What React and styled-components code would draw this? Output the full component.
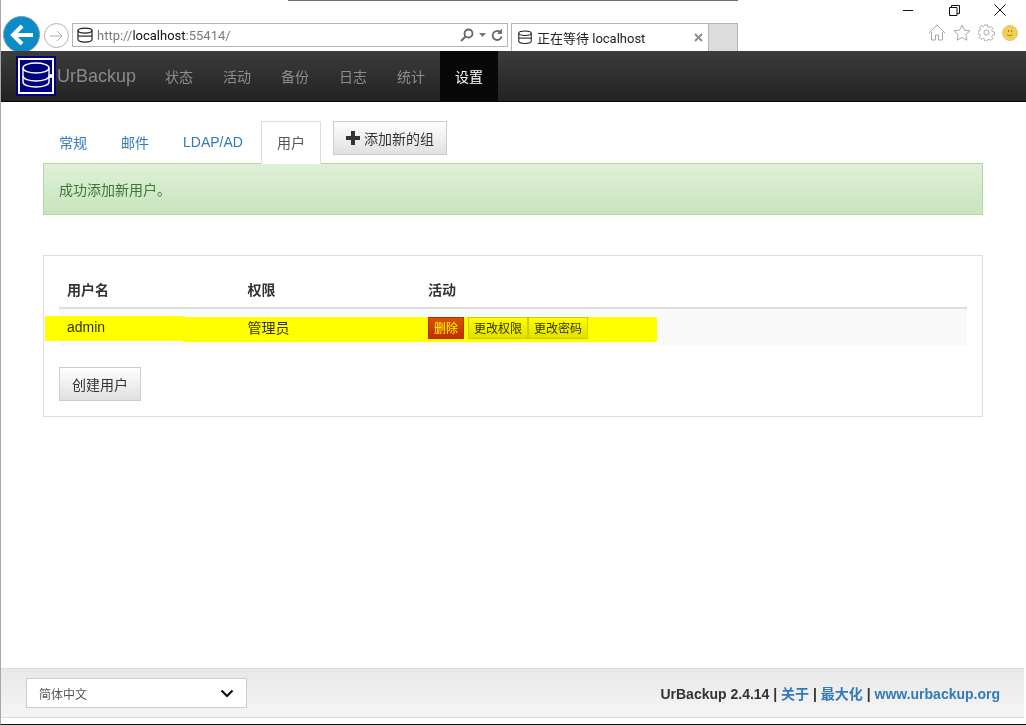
import * as React from 'react';
import styled, { createGlobalStyle } from 'styled-components';

const cjk = `"Liberation Sans", "Noto Sans CJK SC", sans-serif`;
const chromeFont = `Roboto, "Noto Sans CJK SC", sans-serif`;

const GlobalStyle = createGlobalStyle`
    html, body {
        margin: 0;
        padding: 0;
        background: #fff;
    }
    * {
        box-sizing: border-box;
    }
`;

const Page = styled.div`
    width: 1026px;
    height: 725px;
    display: flex;
    flex-direction: column;
    position: relative;
    overflow: hidden;
    border-left: 1px solid #a8a8a8;
    border-bottom: 1px solid #111;
    font-family: ${cjk};
    font-size: 14px;
    color: #333;
`;

/* browser chrome */
const Chrome = styled.div`
    height: 51px;
    flex: none;
    display: flex;
    flex-direction: column;
    position: relative;
    overflow: hidden;
`;

const TitleRow = styled.div`
    height: 22px;
    flex: none;
    display: flex;
    justify-content: space-between;
`;

const TitleLine = styled.div`
    width: 450px;
    height: 1px;
    background: #6e6e6e;
    margin-left: 287px;
`;

const WindowButtons = styled.div`
    display: flex;
    padding-top: 3px;
    margin-right: 3px;
    height: 20px;
`;

const WindowButton = styled.div`
    width: 46px;
    height: 14px;
    display: flex;
    align-items: center;
    justify-content: center;
`;

const AddressRow = styled.div`
    flex: 1;
    display: flex;
    align-items: flex-start;
    padding: 1px 0 0 43px;
`;

const BackButton = styled.div`
    position: absolute;
    left: 2px;
    top: 16px;
    width: 37px;
    height: 37px;
    border-radius: 50%;
    background: #0a8ccb;
    border: 1px solid #8a9aa5;
    display: flex;
    align-items: center;
    justify-content: center;
`;

const ForwardButton = styled.div`
    width: 25px;
    height: 25px;
    border-radius: 50%;
    border: 1px solid #b5b5b5;
    display: flex;
    align-items: center;
    justify-content: center;
    flex: none;
`;

const AddressBox = styled.div`
    width: 436px;
    height: 24px;
    margin-left: 3px;
    border: 1px solid #b4b4b4;
    display: flex;
    align-items: center;
    padding: 0 4px 0 3px;
    flex: none;
    font-family: ${chromeFont};
    font-size: 13px;
    color: #7a7a7a;
`;

const Url = styled.span`
    margin-left: 3px;
    flex: 1;
    b {
        font-weight: 400;
        color: #111;
    }
`;

const AddressTools = styled.div`
    display: flex;
    align-items: center;
    gap: 5px;
`;

const Tab = styled.div`
    width: 198px;
    height: 28px;
    margin-left: 3px;
    border: 1px solid #b4b4b4;
    border-bottom: none;
    display: flex;
    align-items: center;
    padding: 0 5px;
    flex: none;
    font-family: ${chromeFont};
    font-size: 13px;
    color: #222;
`;

const TabTitle = styled.span`
    margin-left: 4px;
    flex: 1;
`;

const TabClose = styled.span`
    display: flex;
`;

const NewTab = styled.div`
    width: 29px;
    height: 28px;
    background: #dcdcdc;
    border: 1px solid #b4b4b4;
    border-left: none;
    border-bottom: none;
    flex: none;
`;

const BrowserTools = styled.div`
    margin-left: auto;
    margin-right: 8px;
    margin-top: 1px;
    display: flex;
    align-items: center;
    gap: 7px;
`;

const Smiley = styled.div`
    width: 16px;
    height: 16px;
    border-radius: 50%;
    background: #f3cf4f;
    border: 1px solid #d8c690;
    display: flex;
    align-items: center;
    justify-content: center;
`;

/* urbackup navbar */
const Navbar = styled.div`
    height: 51px;
    flex: none;
    display: flex;
    align-items: stretch;
    background: linear-gradient(to bottom, #3c3c3c 0%, #222 100%);
    border-bottom: 1px solid #080808;
`;

const Brand = styled.div`
    display: flex;
    align-items: center;
    padding-left: 15px;
    width: 149px;
    flex: none;
`;

const BrandName = styled.span`
    font-size: 18px;
    color: #8a8a8a;
    margin-left: 1px;
`;

const NavItem = styled.div`
    padding: 0 15px;
    display: flex;
    align-items: center;
    font-size: 14px;
    color: ${({ $active }) => ($active ? '#fff' : '#8d8d8d')};
    background: ${({ $active }) => ($active ? '#080808' : 'transparent')};
`;

/* main content */
const Content = styled.div`
    flex: 1;
    padding: 19px 43px 0 42px;
`;

const Tabs = styled.div`
    display: flex;
    align-items: flex-start;
    height: 42px;
`;

const TabLink = styled.div`
    height: ${({ $active }) => ($active ? '43px' : '42px')};
    padding: 0 15px 2px;
    margin-right: 2px;
    display: flex;
    align-items: center;
    border: 1px solid ${({ $active }) => ($active ? '#ddd' : 'transparent')};
    border-bottom: none;
    background: #fff;
    position: relative;
    z-index: 1;
    color: ${({ $active }) => ($active ? '#555' : '#337ab7')};
`;

const Button = styled.div`
    display: inline-flex;
    align-items: center;
    justify-content: center;
    height: 34px;
    padding: 0 12px;
    border: 1px solid #ccc;
    background: linear-gradient(to bottom, #fff 0%, #e0e0e0 100%);
    color: #333;
    font-size: 14px;
`;

const AddGroupButton = styled(Button)`
    margin-left: 10px;
    gap: 4px;
`;

const Alert = styled.div`
    height: 52px;
    padding: 0 15px;
    display: flex;
    align-items: center;
    border: 1px solid #b2dba1;
    background: linear-gradient(to bottom, #dff0d8 0%, #c8e5bc 100%);
    color: #3c763d;
`;

const Panel = styled.div`
    margin-top: 40px;
    height: 162px;
    border: 1px solid #ddd;
    padding: 15px;
    position: relative;
`;

const Row = styled.div`
    display: grid;
    grid-template-columns: 180.5px 180.5px 1fr;
    padding: 0 8px;
    align-items: center;
`;

const HeadRow = styled(Row)`
    height: 38px;
    border-bottom: 2px solid #ddd;
    font-weight: 700;
`;

/* the white strip keeps the marker pure yellow over the striped row */
const BodyRow = styled(Row)`
    height: 37px;
    background: #f9f9f9;
    position: relative;
    &::before {
        content: '';
        position: absolute;
        left: 0;
        top: 7px;
        width: 598px;
        height: 26px;
        background: #fff;
    }
`;

const Cell = styled.span`
    position: relative;
    margin-bottom: 2px;
`;

const Actions = styled.div`
    display: flex;
    position: relative;
`;

const SmallButton = styled.div`
    height: 22px;
    padding: 0 5px;
    display: flex;
    align-items: center;
    font-size: 12px;
    border: 1px solid #ccc;
    color: #333;
    background: linear-gradient(to bottom, #fff 0%, #e0e0e0 100%);
`;

const DeleteButton = styled(SmallButton)`
    background: linear-gradient(to bottom, #d9534f 0%, #c12e2a 100%);
    border-color: #b92c28;
    color: #fff;
    margin-right: 4px;
`;

const CreateButton = styled(Button)`
    margin-top: 21px;
`;

/* marker strokes on top of the row, multiplied so the text shows through */
const Highlight = styled.div`
    position: absolute;
    left: ${({ $left }) => $left}px;
    top: ${({ $top }) => $top}px;
    width: ${({ $width }) => $width}px;
    height: 25px;
    background: #ffff00;
    mix-blend-mode: multiply;
`;

/* footer */
const Footer = styled.div`
    height: 50px;
    flex: none;
    margin: 0 2px 6px 0;
    display: flex;
    align-items: center;
    justify-content: space-between;
    padding: 0 24px 0 25px;
    border-top: 1px solid #ddd;
    border-bottom: 1px solid #ddd;
    background: linear-gradient(to bottom, #e8e8e8 0%, #f5f5f5 100%);
`;

const LanguageSelect = styled.div`
    width: 221px;
    height: 30px;
    border: 1px solid #ccc;
    background: #fff;
    display: flex;
    align-items: center;
    justify-content: space-between;
    padding: 0 12px;
    font-size: 12px;
    color: #555;
`;

const FooterInfo = styled.div`
    font-weight: 700;
    font-size: 14px;
    color: #333;
    a {
        color: #337ab7;
        text-decoration: none;
    }
`;

const DbIcon = ({ size = 18, color = '#222' }) => (
    <svg width={size} height={size * 0.9} viewBox="0 0 18 16" fill="none" stroke={color} strokeWidth="1.2">
        <path d="M2 3.5C2 2 4.5 1 9 1s7 1 7 2.5v9c0 1.5-2.500 2.500-7 2.500s-7-1-7-2.500z" />
        <path d="M2 3.500C2 5 4.500 6 9 6s7-1 7-2.500" />
        <path d="M2 9h14" />
    </svg>
);

const Logo = () => (
    <svg width="40" height="40" viewBox="0 0 40 40">
        <rect width="40" height="40" fill="#000080" />
        <path d="M3 3h34v34H3z" fill="none" stroke="#fff" strokeWidth="2" />
        <g fill="none" stroke="#fff" strokeWidth="1.400">
            <path d="M7 12c0-3 6-5 13-5s13 2 13 5v14c0 3-6 5-13 5s-13-2-13-5z" />
            <path d="M7 12c0 3 6 5 13 5s13-2 13-5" />
            <path d="M7 20c0 3 6 5 13 5s13-2 13-5" />
        </g>
        <circle cx="35" cy="20" r="2" fill="#fff" />
    </svg>
);

const App = () => {
    const navItems = ['状态', '活动', '备份', '日志', '统计'];

    return <>
        <GlobalStyle />
        <Page>
            <Chrome>
                <TitleRow>
                    <TitleLine />
                    <WindowButtons>
                        <WindowButton>
                            <svg width="11" height="11" viewBox="0 0 11 11" stroke="#111"><path d="M0 5.500h10" /></svg>
                        </WindowButton>
                        <WindowButton>
                            <svg width="11" height="11" viewBox="0 0 11 11" fill="none" stroke="#111">
                                <path d="M.5 2.500h7.500v8H.5zM2.500 2.500V.5h8v8H8" />
                            </svg>
                        </WindowButton>
                        <WindowButton>
                            <svg width="12" height="12" viewBox="0 0 12 12" stroke="#111"><path d="M.5.5l11 11M11.500.5l-11 11" /></svg>
                        </WindowButton>
                    </WindowButtons>
                </TitleRow>
                <BackButton>
                    <svg width="24" height="22" viewBox="0 0 24 22" fill="none" stroke="#fff" strokeWidth="4">
                        <path d="M23 11H4M12 2l-9 9 9 9" />
                    </svg>
                </BackButton>
                <AddressRow>
                    <ForwardButton>
                        <svg width="16" height="14" viewBox="0 0 16 14" fill="none" stroke="#b0b0b0" strokeWidth="1">
                            <path d="M1 7h12M8 2l5 5-5 5" />
                        </svg>
                    </ForwardButton>
                    <AddressBox>
                        <DbIcon />
                        <Url>http://<b>localhost</b>:55414/</Url>
                        <AddressTools>
                            <svg width="14" height="14" viewBox="0 0 14 14" fill="none" stroke="#666" strokeWidth="1.800">
                                <circle cx="8.500" cy="5.500" r="4" />
                                <path d="M5.500 8.500L1 13" />
                            </svg>
                            <svg width="7" height="4" viewBox="0 0 7 4" fill="#777"><path d="M0 0h7L3.500 4z" /></svg>
                            <svg width="12" height="13" viewBox="0 0 12 13" fill="none" stroke="#666" strokeWidth="1.800">
                                <path d="M10.500 7.500a4.500 4.500 0 1 1-1.500-4.500" />
                                <path d="M10.500 0v4.500H6.500" fill="#666" strokeWidth="0.800" />
                            </svg>
                        </AddressTools>
                    </AddressBox>
                    <Tab>
                        <DbIcon size={16} />
                        <TabTitle>正在等待 localhost</TabTitle>
                        <TabClose>
                            <svg width="9" height="9" viewBox="0 0 9 9" stroke="#8d8d8d" strokeWidth="2"><path d="M1 1l7 7M8 1L1 8" /></svg>
                        </TabClose>
                    </Tab>
                    <NewTab />
                    <BrowserTools>
                        <svg width="18" height="17" viewBox="0 0 18 17" fill="none" stroke="#a8a8a8">
                            <path d="M1 9l8-8 8 8M3.500 8v8h4v-5h3v5h4V8" />
                        </svg>
                        <svg width="18" height="17" viewBox="0 0 18 17" fill="none" stroke="#a8a8a8">
                            <path d="M9 1l2.400 5.200 5.600.6-4.200 3.800 1.200 5.600L9 13.400 4 16.200l1.200-5.600L1 6.800l5.600-.6z" />
                        </svg>
                        <svg width="17" height="17" viewBox="0 0 17 17" fill="none" stroke="#a8a8a8">
                            <circle cx="8.500" cy="8.500" r="2.500" />
                            <path d="M7 1h3l.4 2.200 1.600.7 1.900-1.300 2 2-1.300 1.900.7 1.600 2.200.4v3l-2.200.4-.7 1.600 1.300 1.900-2 2-1.900-1.300-1.600.7L10 18H7l-.4-2.200-1.600-.7-1.900 1.300-2-2 1.300-1.900-.7-1.600L0 10.500v-3l2.200-.4.700-1.600L1.600 3.600l2-2 1.900 1.300 1.100-.7z" transform="scale(0.94)" />
                        </svg>
                        <Smiley>
                            <svg width="10" height="10" viewBox="0 0 10 10" fill="none" stroke="#9a8430">
                                <path d="M3.500 2v2M6.500 2v2" />
                                <path d="M2 6.500c1.500 1.500 4.500 1.500 6 0" />
                            </svg>
                        </Smiley>
                    </BrowserTools>
                </AddressRow>
            </Chrome>

            <Navbar>
                <Brand>
                    <Logo />
                    <BrandName>UrBackup</BrandName>
                </Brand>
                {navItems.map(item => <NavItem key={item}>{item}</NavItem>)}
                <NavItem $active>设置</NavItem>
            </Navbar>

            <Content>
                <Tabs>
                    <TabLink>常规</TabLink>
                    <TabLink>邮件</TabLink>
                    <TabLink>LDAP/AD</TabLink>
                    <TabLink $active>用户</TabLink>
                    <AddGroupButton>
                        <svg width="14" height="14" viewBox="0 0 14 14" fill="#333"><path d="M5 0h4v5h5v4H9v5H5V9H0V5h5z" /></svg>
                        添加新的组
                    </AddGroupButton>
                </Tabs>
                <Alert>成功添加新用户。</Alert>
                <Panel>
                    <HeadRow>
                        <span>用户名</span>
                        <span>权限</span>
                        <span>活动</span>
                    </HeadRow>
                    <BodyRow>
                        <Cell>admin</Cell>
                        <Cell>管理员</Cell>
                        <Actions>
                            <DeleteButton>删除</DeleteButton>
                            <SmallButton>更改权限</SmallButton>
                            <SmallButton>更改密码</SmallButton>
                        </Actions>
                    </BodyRow>
                    <CreateButton>创建用户</CreateButton>
                    <Highlight $left={1} $top={60} $width={139} />
                    <Highlight $left={139} $top={61} $width={474} />
                </Panel>
            </Content>

            <Footer>
                <LanguageSelect>
                    简体中文
                    <svg width="14" height="9" viewBox="0 0 14 9" fill="none" stroke="#111" strokeWidth="2.200">
                        <path d="M1.500 1.500L7 7l5.500-5.500" />
                    </svg>
                </LanguageSelect>
                <FooterInfo>
                    UrBackup 2.4.14 | <a>关于</a> | <a>最大化</a> | <a>www.urbackup.org</a>
                </FooterInfo>
            </Footer>
        </Page>
    </>;
};

export default App;
